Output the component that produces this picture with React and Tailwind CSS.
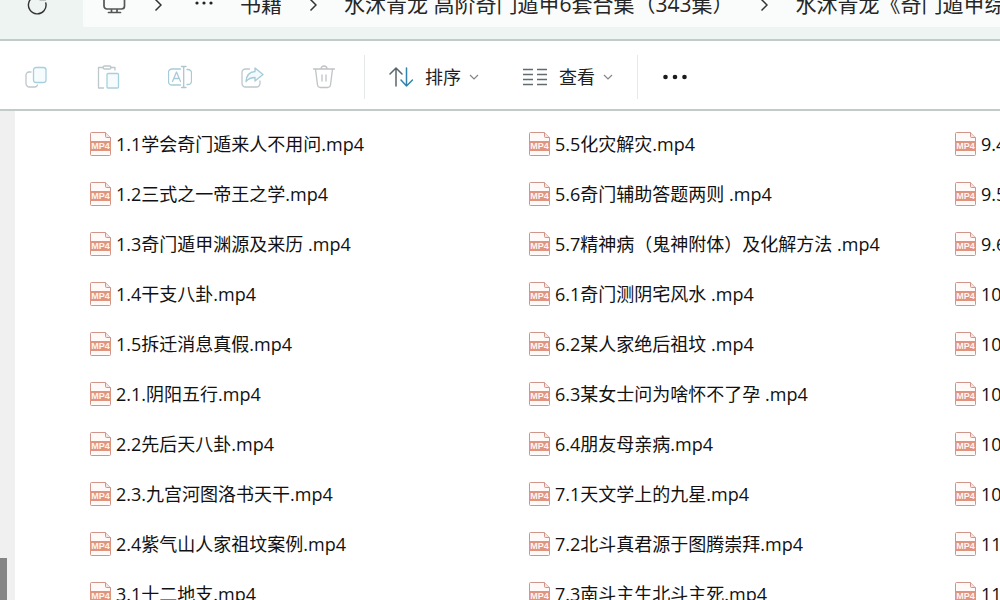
const columns = [
	[
		'1.1学会奇门遁来人不用问.mp4',
		'1.2三式之一帝王之学.mp4',
		'1.3奇门遁甲渊源及来历 .mp4',
		'1.4干支八卦.mp4',
		'1.5拆迁消息真假.mp4',
		'2.1.阴阳五行.mp4',
		'2.2先后天八卦.mp4',
		'2.3.九宫河图洛书天干.mp4',
		'2.4紫气山人家祖坟案例.mp4',
		'3.1十二地支.mp4',
	],
	[
		'5.5化灾解灾.mp4',
		'5.6奇门辅助答题两则 .mp4',
		'5.7精神病（鬼神附体）及化解方法 .mp4',
		'6.1奇门测阴宅风水 .mp4',
		'6.2某人家绝后祖坟 .mp4',
		'6.3某女士问为啥怀不了孕 .mp4',
		'6.4朋友母亲病.mp4',
		'7.1天文学上的九星.mp4',
		'7.2北斗真君源于图腾崇拜.mp4',
		'7.3南斗主生北斗主死.mp4',
	],
	[ '9.4', '9.5', '9.6', '10', '10', '10', '10', '10', '11', '11' ],
];

const Icon = ( { className = '', children, size = 24 } ) => (
	<svg
		width={ size }
		height={ size }
		viewBox={ `0 0 ${ size } ${ size }` }
		fill="none"
		strokeWidth="1.3"
		strokeLinecap="round"
		strokeLinejoin="round"
		aria-hidden="true"
		className={ `shrink-0 ${ className }` }
	>
		{ children }
	</svg>
);

const tools = [
	{
		label: '复制',
		icon: (
			<>
				<path
					d="M7 7H5a3 3 0 0 0-3 3v8.500a3.500 3.500 0 0 0 3.500 3.500H11a3 3 0 0 0 2.500-2"
					stroke="#bdc7cc"
				/>
				<rect x="9.500" y="2.500" width="12.500" height="15" rx="2.500" stroke="#a7d0dd" fill="#f6fcfe" />
			</>
		),
	},
	{
		label: '粘贴',
		icon: (
			<>
				<path d="M7 2.500H2.500v20.500H7.500M14.500 2.500H19V5" stroke="#bdc7cc" />
				<rect x="7" y="1" width="8" height="3" rx="1.500" stroke="#bdc7cc" />
				<rect x="11" y="8.500" width="11.500" height="14.500" rx="1" stroke="#a7d0dd" fill="#f6fcfe" />
			</>
		),
	},
	{
		label: '重命名',
		icon: (
			<>
				<path
					d="M12.500 4H4a3.500 3.500 0 0 0-3.500 3.500v9A3.500 3.500 0 0 0 4 20h8.500M19 4.500h1a3.500 3.500 0 0 1 3.500 3.500v8a3.500 3.500 0 0 1-3.500 3.500h-1"
					stroke="#a7cbd9"
				/>
				<path d="M4.500 16.500 8.500 7l4 9.500M6 13.500h5" stroke="#a7cbd9" />
				<path d="M13.500 1.500h4.500M15.700 1.500v21M13.500 22.500h4.500" stroke="#b1c5cd" />
			</>
		),
	},
	{
		label: '共享',
		icon: (
			<>
				<path
					d="M9.500 4H5.500A3.500 3.500 0 0 0 2 7.500v11A3.500 3.500 0 0 0 5.500 22h11a3.500 3.500 0 0 0 3.500-3.500V16"
					stroke="#bdc7cc"
				/>
				<path
					d="M15 3l8 6.500-8 6.500v-3.500c-4 0-6.500 1-9 4 .3-6 3.500-9.500 9-10z"
					stroke="#a4cbd9"
					fill="#f3fafd"
				/>
			</>
		),
	},
	{
		label: '删除',
		icon: (
			<path
				d="M1.500 4h21M3.500 4l2 16a3 3 0 0 0 3 2.500h7a3 3 0 0 0 3-2.500l2-16M9 4c0-4 6-4 6 0M10 10v6M14 10v6"
				stroke="#bfc3c5"
			/>
		),
	},
];

const Mp4Icon = () => (
	<svg width="21" height="24" viewBox="0 0 21 24" className="shrink-0" aria-hidden="true">
		<path
			d="M1.500 .5h14L20.500 5.500v17a1 1 0 0 1-1 1h-18a1 1 0 0 1-1-1v-21a1 1 0 0 1 1-1z"
			fill="#fffaf7"
			stroke="#cf948a"
		/>
		<path d="M15.500 .5v4a1 1 0 0 0 1 1h4" fill="#f6e3df" stroke="#cf948a" />
		<path d="M0 9h21v10H0z" fill="#df9480" />
		<text
			x="10.500"
			y="17.200"
			textAnchor="middle"
			fontSize="9"
			fontWeight="700"
			fill="#fff6f0"
			className="font-['Liberation_Sans',sans-serif]"
		>
			MP4
		</text>
	</svg>
);

const Separator = () => (
	<svg width="8" height="14" viewBox="0 0 8 14" fill="none" className="shrink-0" aria-hidden="true">
		<path d="M1.500 1.500 7 7l-5.500 5.500" stroke="#333" strokeWidth="1.500" />
	</svg>
);

const Caret = () => (
	<svg width="10" height="6" viewBox="0 0 10 6" fill="none" aria-hidden="true">
		<path d="M1 1l4 4 4-4" stroke="#858585" strokeWidth="1.200" />
	</svg>
);

const Dots = () => (
	<svg width="26" height="6" viewBox="0 0 26 6" fill="#1b1b1b" aria-hidden="true">
		<circle cx="3.500" cy="3" r="2.300" />
		<circle cx="13" cy="3" r="2.300" />
		<circle cx="22.500" cy="3" r="2.300" />
	</svg>
);

const AddressBar = () => (
	<header className="flex h-[41px] shrink-0 items-start border-b-2 border-[#c1cbca] bg-[#edf4f2]">
		<div className="-mt-[17px] flex h-11 w-full items-center">
			<button type="button" aria-label="刷新" className="flex w-[83px] shrink-0 items-center pl-[25px]">
				<Icon>
					<path
						d="M17.500 5A8.800 8.800 0 1 0 20.800 10M20.500 1v5.500H15"
						stroke="#333"
						strokeWidth="1.400"
					/>
				</Icon>
			</button>
			<nav className="flex h-full min-w-0 flex-1 items-center gap-[27px] overflow-hidden whitespace-nowrap bg-[#fafcfb] pl-5 text-[21px] text-[#262626]">
				<button type="button" aria-label="此电脑" className="shrink-0">
					<Icon>
						<path
							d="M4 1.500h14.500a3 3 0 0 1 3 3V13a3 3 0 0 1-3 3H4a3 3 0 0 1-3-3V4.500a3 3 0 0 1 3-3zM8.500 16v3.500M14 16v3.500M5.500 19.500h12"
							stroke="#555"
							strokeWidth="1.700"
						/>
					</Icon>
				</button>
				<Separator />
				<button type="button" aria-label="更多路径" className="shrink-0">
					<svg width="24" height="8" viewBox="0 0 24 8" fill="#222" aria-hidden="true">
						<circle cx="8" cy="2" r="1.600" />
						<circle cx="15" cy="2" r="1.600" />
						<circle cx="22" cy="2" r="1.600" />
					</svg>
				</button>
				<a href="#books">书籍</a>
				<Separator />
				<a href="#collection">水沐青龙 高阶奇门遁甲6套合集（343集）</a>
				<Separator />
				<a href="#series">水沐青龙《奇门遁甲综</a>
			</nav>
		</div>
	</header>
);

const Toolbar = () => (
	<div className="flex h-[70px] shrink-0 items-center border-b-2 border-[#c1cbca] bg-white pt-1 text-lg text-[#1f1f1f]">
		{ tools.map( ( tool ) => (
			<button
				key={ tool.label }
				type="button"
				aria-label={ tool.label }
				className="flex w-18 shrink-0 justify-center"
			>
				<Icon>{ tool.icon }</Icon>
			</button>
		) ) }
		<div className="ml-1 flex h-11 shrink-0 items-center gap-11 border-x border-[#e6e9e9] px-6">
			<button type="button" className="flex items-center gap-3">
				<Icon>
					<path d="M7 21V3M1 9l6-6 6 6" stroke="#59656b" strokeWidth="1.500" />
					<path d="M17.500 3v18M12 15l5.500 6 6-6" stroke="#2f83ae" strokeWidth="1.500" />
				</Icon>
				<span className="flex items-center gap-2">
					排序
					<Caret />
				</span>
			</button>
			<button type="button" className="flex items-center gap-3">
				<Icon>
					<path
						d="M0 4.500h10M14 4.500h10M0 9.500h10M14 9.500h10M0 14.500h10M14 14.500h10M0 19.500h10M14 19.500h10"
						stroke="#626b70"
						strokeWidth="1.400"
						strokeLinecap="butt"
					/>
				</Icon>
				<span className="flex items-center gap-2">
					查看
					<Caret />
				</span>
			</button>
		</div>
		<button type="button" aria-label="查看更多" className="ml-6">
			<Dots />
		</button>
	</div>
);

const FileColumn = ( { files } ) => (
	<ul className="min-w-0">
		{ files.map( ( file, index ) => (
			<li key={ index } className="flex h-[50px] items-center">
				<button type="button" className="flex items-center gap-[5px] whitespace-nowrap">
					<Mp4Icon />
					{ file }
				</button>
			</li>
		) ) }
	</ul>
);

const App = () => {
	return (
		<div className="flex h-screen flex-col overflow-hidden bg-white font-['Open_Sans','Noto_Sans_CJK_SC',sans-serif]">
			<AddressBar />
			<Toolbar />
			<main className="flex min-h-0 flex-1">
				<div className="flex w-[15px] shrink-0 flex-col justify-end bg-[#f0f0f0]">
					<div className="h-[42px] w-[7px] bg-[#858585]" />
				</div>
				<div className="grid min-w-0 flex-1 grid-cols-[439px_426px_1fr] overflow-hidden pl-[75px] pt-2 text-lg text-[#111]">
					{ columns.map( ( files, index ) => (
						<FileColumn key={ index } files={ files } />
					) ) }
				</div>
			</main>
		</div>
	);
};

export default App;
